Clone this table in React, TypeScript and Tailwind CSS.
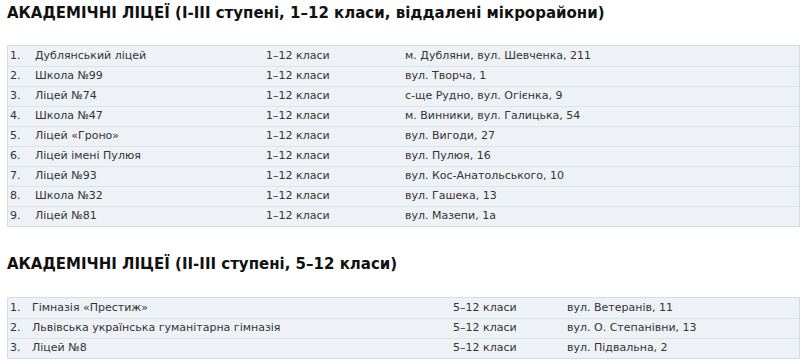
import React from "react";

const t1: [string, string, string][] = [
  ["Дублянський ліцей", "1–12 класи", "м. Дубляни, вул. Шевченка, 211"],
  ["Школа №99", "1–12 класи", "вул. Творча, 1"],
  ["Ліцей №74", "1–12 класи", "с-ще Рудно, вул. Огієнка, 9"],
  ["Школа №47", "1–12 класи", "м. Винники, вул. Галицька, 54"],
  ["Ліцей «Гроно»", "1–12 класи", "вул. Вигоди, 27"],
  ["Ліцей імені Пулюя", "1–12 класи", "вул. Пулюя, 16"],
  ["Ліцей №93", "1–12 класи", "вул. Кос-Анатольського, 10"],
  ["Школа №32", "1–12 класи", "вул. Гашека, 13"],
  ["Ліцей №81", "1–12 класи", "вул. Мазепи, 1а"],
];

const t2: [string, string, string][] = [
  ["Гімназія «Престиж»", "5–12 класи", "вул. Ветеранів, 11"],
  ["Львівська українська гуманітарна гімназія", "5–12 класи", "вул. О. Степанівни, 13"],
  ["Ліцей №8", "5–12 класи", "вул. Підвальна, 2"],
];

function Table({ rows, cols }: { rows: [string, string, string][]; cols: string }) {
  return (
    <div className="ml-[7px] w-[793px] border border-[#d6dce3] bg-[#eef2f7]">
      {rows.map((r, i) => (
        <div
          key={i}
          className={`grid h-[20px] items-center ${cols} ${i > 0 ? "border-t border-[#dde2e8]" : ""}`}
        >
          <div className="pl-[2px]">{i + 1}.</div>
          <div>{r[0]}</div>
          <div>{r[1]}</div>
          <div>{r[2]}</div>
        </div>
      ))}
    </div>
  );
}

export default function App() {
  return (
    <div
      className="w-[800px] h-[359px] bg-white text-[#333] overflow-hidden"
      style={{ fontFamily: '"DejaVu Sans", Verdana, sans-serif' }}
    >
      <h2 className="pl-[7px] pt-[2px] text-[15px] leading-[22px] font-bold text-[#111]">
        АКАДЕМІЧНІ ЛІЦЕЇ (І-ІІІ ступені, 1–12 класи, віддалені мікрорайони)
      </h2>
      <div className="mt-[21px] text-[11px]">
        <Table rows={t1} cols="grid-cols-[27px_231px_139px_1fr]" />
      </div>
      <h2 className="mt-[26px] pl-[7px] text-[15px] leading-[22px] font-bold text-[#111]">
        АКАДЕМІЧНІ ЛІЦЕЇ (ІІ-ІІІ ступені, 5–12 класи)
      </h2>
      <div className="mt-[22px] text-[11px]">
        <Table rows={t2} cols="grid-cols-[24px_421px_114px_1fr]" />
      </div>
    </div>
  );
}
